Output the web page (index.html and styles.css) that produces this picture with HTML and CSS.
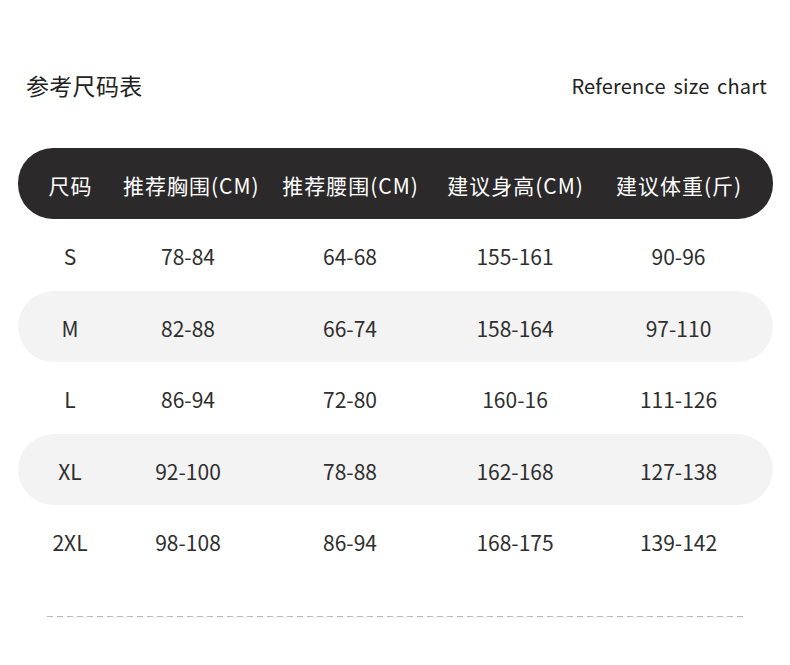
FILE: index.html
```html
<!DOCTYPE html>
<html lang="zh">
<head>
<meta charset="utf-8">
<link rel="stylesheet" href="styles.css">
</head>
<body>
<div class="page">
  <div class="title-row">
    <div class="title">参考尺码表</div>
    <div class="subtitle">Reference size chart</div>
  </div>
  <div class="table">
    <div class="row head">
      <div>尺码</div><div>推荐胸围(CM)</div><div>推荐腰围(CM)</div><div>建议身高(CM)</div><div>建议体重(斤)</div>
    </div>
    <div class="row">
      <div>S</div><div>78-84</div><div>64-68</div><div>155-161</div><div>90-96</div>
    </div>
    <div class="row shade">
      <div>M</div><div>82-88</div><div>66-74</div><div>158-164</div><div>97-110</div>
    </div>
    <div class="row">
      <div>L</div><div>86-94</div><div>72-80</div><div>160-16</div><div>111-126</div>
    </div>
    <div class="row shade">
      <div>XL</div><div>92-100</div><div>78-88</div><div>162-168</div><div>127-138</div>
    </div>
    <div class="row">
      <div>2XL</div><div>98-108</div><div>86-94</div><div>168-175</div><div>139-142</div>
    </div>
  </div>
  <div class="dash"></div>
</div>
</body>
</html>
```
FILE: styles.css
```css
html, body {
  margin: 0;
  padding: 0;
  background: #ffffff;
}
body {
  font-family: "Noto Sans CJK SC", "Noto Sans", sans-serif;
  color: #2e2e2e;
}
.page {
  width: 790px;
  height: 665px;
  padding-top: 68px;
  box-sizing: border-box;
}
.title-row {
  display: flex;
  justify-content: space-between;
  align-items: center;
  padding: 0 23px 0 26px;
  height: 34px;
}
.title {
  font-size: 23px;
  color: #222222;
  letter-spacing: 0.3px;
}
.subtitle {
  font-size: 20px;
  color: #222222;
  word-spacing: 3px;
  letter-spacing: 0.2px;
}
.table {
  margin: 46px 17px 0 18px;
}
.row {
  display: grid;
  grid-template-columns: 104px 132px 192px 138px 189px;
  height: 71.5px;
  align-items: center;
  border-radius: 36px;
  font-size: 21px;
  padding-top: 3px;
  box-sizing: border-box;
}
.row > div {
  text-align: center;
  white-space: nowrap;
}
.row.head {
  height: 71px;
  background: #2b292a;
  color: #ffffff;
  border-radius: 35px;
  padding-top: 2px;
  letter-spacing: 1px;
}
.row.head > div {
  padding-left: 1px;
}
.row.shade {
  background: #f3f3f3;
}
.dash {
  margin: 39px 45px 0 47px;
  height: 1px;
  background: repeating-linear-gradient(to right, #b8b8b8 0 6px, transparent 6px 10px);
}
```
